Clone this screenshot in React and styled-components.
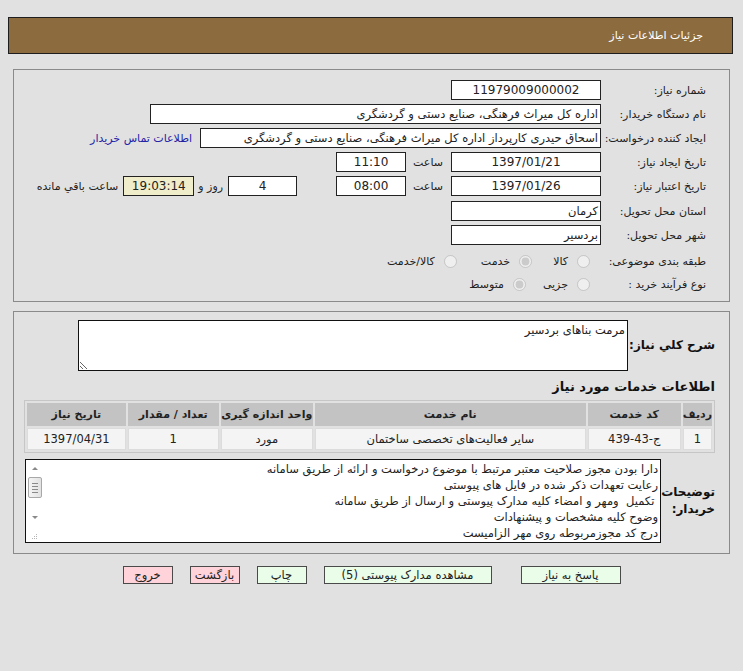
import React from 'react';
import styled, { createGlobalStyle } from 'styled-components';

const GlobalStyle = createGlobalStyle`
  html, body {
    margin: 0;
    padding: 0;
    background: #e1e1e1;
  }
  body {
    direction: rtl;
    font-family: Tahoma, "DejaVu Sans", sans-serif;
    font-size: 11px;
    color: #111;
  }
`;

const Page = styled.div`
  padding: 17px 0 20px;
  width: 743px;
  box-sizing: border-box;
`;

const TitleBar = styled.div`
  margin: 0 10px 0 8px;
  height: 37px;
  box-sizing: border-box;
  border: 1px solid #1e1e1e;
  background: #8c6c3f;
  color: #fff;
  display: flex;
  align-items: center;
  padding-right: 29px;
  font-size: 11px;
`;

const Panel = styled.div`
  margin: ${(p) => p.$top}px 13px 0 13px;
  border: 1px solid #8a8a8a;
  box-sizing: border-box;
  padding: ${(p) => p.$pad};
`;

const Row = styled.div`
  display: flex;
  align-items: center;
  height: ${(p) => p.$h || 24}px;
  margin-top: ${(p) => p.$mt || 0}px;
`;

const Label = styled.div`
  width: 97px;
  margin-left: 8px;
  white-space: nowrap;
  color: #222;
`;

const Field = styled.div`
  width: ${(p) => p.$w}px;
  height: 20px;
  box-sizing: border-box;
  border: 1px solid #222;
  background: ${(p) => (p.$timer ? '#f0edcb' : '#fff')};
  display: flex;
  align-items: center;
  justify-content: ${(p) => (p.$center ? 'center' : 'flex-start')};
  padding: 0 2px;
  white-space: nowrap;
  overflow: hidden;
  font-size: ${(p) => (p.$center ? 12 : 11.5)}px;
  color: #222;
  margin-left: ${(p) => p.$ml || 0}px;
`;

const Text = styled.span`
  margin-left: ${(p) => p.$ml || 0}px;
  white-space: nowrap;
  color: #222;
`;

const ContactLink = styled.a`
  color: #2323a8;
  text-decoration: none;
  cursor: pointer;
  white-space: nowrap;
`;

const RadioLabel = styled.label`
  display: inline-flex;
  align-items: center;
  margin-left: ${(p) => p.$ml}px;
  color: #222;
  white-space: nowrap;
  input {
    margin: 0 11px 0 9px;
    width: 13px;
    height: 13px;
  }
`;

const DescRow = styled.div`
  display: flex;
  align-items: center;
  margin-top: ${(p) => p.$mt || 0}px;
`;

const BoldLabel = styled.div`
  width: ${(p) => p.$w}px;
  margin-left: ${(p) => p.$ml || 0}px;
  font-weight: bold;
  font-size: 12px;
  line-height: 17px;
  white-space: ${(p) => (p.$wrap ? 'normal' : 'nowrap')};
`;

const Area = styled.textarea`
  width: 550px;
  height: 51px;
  box-sizing: border-box;
  border: 1px solid #111;
  background: #fff;
  font-family: Tahoma, "DejaVu Sans", sans-serif;
  font-size: 11.5px;
  line-height: 16px;
  color: #222;
  padding: 1px 2px;
  direction: rtl;
  resize: both;
  outline: none;
`;

const ScrollBox = styled.div`
  width: 636px;
  height: 84px;
  box-sizing: border-box;
  border: 1px solid #111;
  background: #fff;
  display: flex;
`;

const ScrollText = styled.div`
  flex: 1;
  padding: 1px 2px 0;
  font-size: 11.5px;
  line-height: 16px;
  color: #222;
  white-space: pre;
  overflow: hidden;
`;

const ScrollSide = styled.div`
  width: 17px;
  display: flex;
  flex-direction: column;
`;

const Track = styled.div`
  height: 66px;
  display: flex;
  flex-direction: column;
  align-items: center;
`;

const Arrow = styled.div`
  height: 17px;
  width: 17px;
  display: flex;
  align-items: center;
  justify-content: center;
  &::before {
    content: '';
    border-left: 3px solid transparent;
    border-right: 3px solid transparent;
    ${(p) => (p.$up ? 'border-bottom: 3px solid #8a8a8a;' : 'border-top: 3px solid #8a8a8a;')}
  }
`;

const Thumb = styled.div`
  width: 14px;
  height: 21px;
  margin: 0 0 11px;
  box-sizing: border-box;
  border: 1px solid #a8a8a8;
  border-radius: 2px;
  background: linear-gradient(to right, #f4f4f4, #e2e2e2);
  display: flex;
  flex-direction: column;
  align-items: center;
  justify-content: center;
  gap: 2px;
  span {
    display: block;
    width: 6px;
    height: 1px;
    background: #8a8a8a;
  }
`;

const Grip = styled.div`
  flex: 1;
  display: flex;
  align-items: flex-end;
  justify-content: center;
  padding-bottom: 2px;
`;

const SectionTitle = styled.div`
  font-weight: bold;
  font-size: 13px;
  line-height: 17px;
  margin: 7px 0 5px;
`;

const Table = styled.table`
  width: 691px;
  margin-left: 11px;
  border: 1px solid #c6c6c6;
  border-spacing: 2px;
  font-size: 11.5px;
  th {
    background: #c3c3c3;
    height: 23px;
    font-weight: bold;
    font-size: 11px;
    color: #222;
    padding: 0;
    white-space: nowrap;
  }
  td {
    background: #f4f4f4;
    height: 20px;
    border: 1px solid #dcdcdc;
    text-align: center;
    padding: 0;
    color: #222;
    white-space: nowrap;
  }
`;

const Buttons = styled.div`
  display: flex;
  justify-content: center;
  gap: 17px;
  margin-top: 12px;
`;

const Button = styled.button`
  width: ${(p) => p.$w}px;
  height: 18px;
  border: 1px solid #4a4a4a;
  background: ${(p) => (p.$danger ? '#ffd3d9' : '#e9fde9')};
  font-family: Tahoma, "DejaVu Sans", sans-serif;
  font-size: 11.5px;
  color: #222;
  padding: 0;
  cursor: pointer;
  margin-left: ${(p) => p.$ml || 0}px;
`;

const notes = [
  'دارا بودن مجوز صلاحیت معتبر مرتبط با موضوع درخواست و ارائه از طریق سامانه',
  'رعایت تعهدات ذکر شده در فایل های پیوستی',
  ' تکمیل  ومهر و امضاء کلیه مدارک پیوستی و ارسال از طریق سامانه',
  'وضوح کلیه مشخصات و پیشنهادات',
  'درج کد مجوزمربوطه روی مهر الزامیست',
].join('\n');

const ResizeDots = () => (
  <svg width="7" height="7" viewBox="0 0 7 7">
    {[[5, 1], [5, 3], [5, 5], [3, 3], [3, 5], [1, 5]].map(([x, y]) => (
      <rect key={`${x}-${y}`} x={x} y={y} width="1" height="1" fill="#b5b5b5" />
    ))}
  </svg>
);

export default function App() {
  return (
    <Page>
      <GlobalStyle />
      <TitleBar>جزئیات اطلاعات نیاز</TitleBar>

      <Panel $top={15} $pad="8px 23px 6px 0">
        <Row>
          <Label>شماره نیاز:</Label>
          <Field $w={150} $center>11979009000002</Field>
        </Row>
        <Row>
          <Label>نام دستگاه خریدار:</Label>
          <Field $w={451}>اداره کل میراث فرهنگی، صنایع دستی و گردشگری</Field>
        </Row>
        <Row>
          <Label>ایجاد کننده درخواست:</Label>
          <Field $w={401} $ml={8}>اسحاق حیدری کارپرداز اداره کل میراث فرهنگی، صنایع دستی و گردشگری</Field>
          <ContactLink>اطلاعات تماس خریدار</ContactLink>
        </Row>
        <Row>
          <Label>تاریخ ایجاد نیاز:</Label>
          <Field $w={150} $center $ml={8}>1397/01/21</Field>
          <Text $ml={7}>ساعت</Text>
          <Field $w={70} $center>11:10</Field>
        </Row>
        <Row>
          <Label>تاریخ اعتبار نیاز:</Label>
          <Field $w={150} $center $ml={8}>1397/01/26</Field>
          <Text $ml={7}>ساعت</Text>
          <Field $w={70} $center $ml={39}>08:00</Field>
          <Field $w={69} $center $ml={5}>4</Field>
          <Text $ml={4}>روز و</Text>
          <Field $w={71} $center $timer $ml={5}>19:03:14</Field>
          <Text>ساعت باقي مانده</Text>
        </Row>
        <Row $mt={1}>
          <Label>استان محل تحویل:</Label>
          <Field $w={150}>كرمان</Field>
        </Row>
        <Row>
          <Label>شهر محل تحویل:</Label>
          <Field $w={150}>بردسير</Field>
        </Row>
        <Row $mt={2}>
          <Label>طبقه بندی موضوعی:</Label>
          <RadioLabel $ml={10}>
            <input type="radio" disabled name="cat" />
            کالا
          </RadioLabel>
          <RadioLabel $ml={13}>
            <input type="radio" disabled name="cat" defaultChecked />
            خدمت
          </RadioLabel>
          <RadioLabel $ml={0}>
            <input type="radio" disabled name="cat" />
            کالا/خدمت
          </RadioLabel>
        </Row>
        <Row $h={22}>
          <Label>نوع فرآیند خرید :</Label>
          <RadioLabel $ml={6}>
            <input type="radio" disabled name="proc" />
            جزیی
          </RadioLabel>
          <RadioLabel $ml={0}>
            <input type="radio" disabled name="proc" defaultChecked />
            متوسط
          </RadioLabel>
        </Row>
      </Panel>

      <Panel $top={9} $pad="8px 14px 10px 11px">
        <DescRow>
          <BoldLabel $w={85} $ml={2}>شرح کلي نياز:</BoldLabel>
          <Area readOnly defaultValue="مرمت بناهای بردسیر" />
        </DescRow>
        <SectionTitle>اطلاعات خدمات مورد نیاز</SectionTitle>
        <Table>
          <thead>
            <tr>
              <th style={{ width: 28 }}>ردیف</th>
              <th style={{ width: 93 }}>کد خدمت</th>
              <th style={{ width: 271 }}>نام خدمت</th>
              <th style={{ width: 92 }}>واحد اندازه گیری</th>
              <th style={{ width: 91 }}>تعداد / مقدار</th>
              <th>تاریخ نیاز</th>
            </tr>
          </thead>
          <tbody>
            <tr>
              <td>1</td>
              <td>ج-43-439</td>
              <td>سایر فعالیت‌های تخصصی ساختمان</td>
              <td>مورد</td>
              <td>1</td>
              <td>1397/04/31</td>
            </tr>
          </tbody>
        </Table>
        <DescRow $mt={6}>
          <BoldLabel $w={54} $wrap>توضیحات خریدار:</BoldLabel>
          <ScrollBox>
            <ScrollText>{notes}</ScrollText>
            <ScrollSide>
              <Track>
                <Arrow $up />
                <Thumb>
                  <span />
                  <span />
                  <span />
                  <span />
                </Thumb>
                <Arrow />
              </Track>
              <Grip>
                <ResizeDots />
              </Grip>
            </ScrollSide>
          </ScrollBox>
        </DescRow>
      </Panel>

      <Buttons>
        <Button $w={100} $ml={12}>پاسخ به نیاز</Button>
        <Button $w={168}>مشاهده مدارک پیوستی (5)</Button>
        <Button $w={50}>چاپ</Button>
        <Button $w={50} $danger>بازگشت</Button>
        <Button $w={50} $danger>خروج</Button>
      </Buttons>
    </Page>
  );
}
